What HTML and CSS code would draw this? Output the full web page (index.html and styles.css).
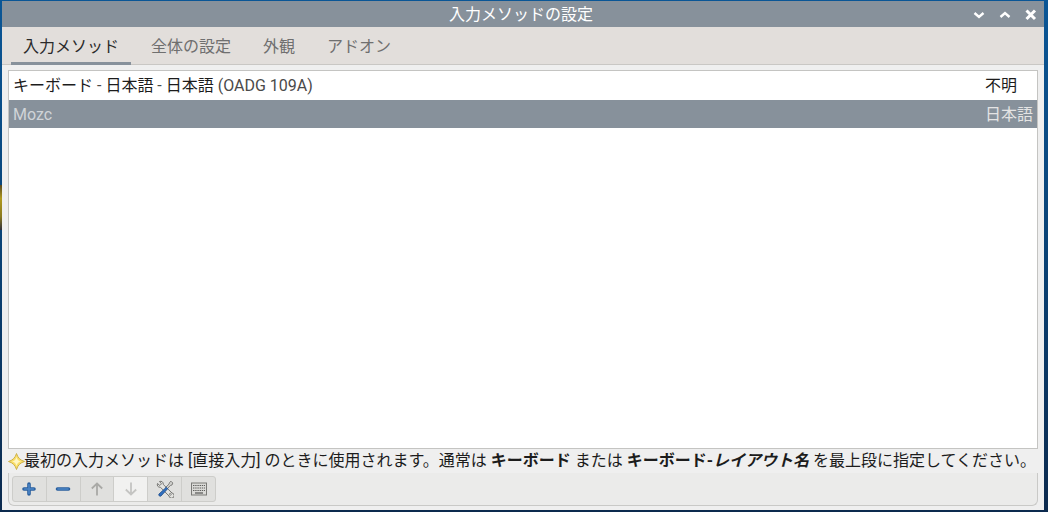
FILE: index.html
```html
<!DOCTYPE html>
<html lang="ja">
<head>
<meta charset="utf-8">
<title>入力メソッドの設定</title>
<link rel="stylesheet" href="styles.css">
</head>
<body>
<div class="desktop">
  <div class="sliver"></div>
  <main class="window">
    <header class="titlebar">
      <span class="title">入力メソッドの設定</span>
      <div class="controls">
        <svg width="16" height="16" viewBox="0 0 16 16"><path d="M3.500 6l4.500 4 4.500-4" class="ctl"/></svg>
        <svg width="16" height="16" viewBox="0 0 16 16"><path d="M3.500 10l4.500-4 4.500 4" class="ctl"/></svg>
        <svg width="16" height="16" viewBox="0 0 16 16"><path d="M3.500 3.500l8.500 8.500M12 3.500l-8.500 8.500" class="ctl ctl-x"/></svg>
      </div>
    </header>
    <nav class="tabs">
      <span class="tab active">入力メソッド</span>
      <span class="tab">全体の設定</span>
      <span class="tab">外観</span>
      <span class="tab">アドオン</span>
    </nav>
    <section class="body">
      <div class="list">
        <div class="row"><span>キーボード <span class="soft">-</span> 日本語 <span class="soft">-</span> 日本語 <span class="soft">(OADG 109A)</span></span><span class="lang unknown">不明</span></div>
        <div class="row selected"><span class="soft-light">Mozc</span><span class="lang">日本語</span></div>
      </div>
      <p class="hint">
        <svg class="star" width="17" height="17" viewBox="0 0 17 17"><path d="M8.500 .5C9.800 4.800 12.200 7.200 16.500 8.500 12.200 9.800 9.800 12.200 8.500 16.500 7.200 12.200 4.800 9.800 .5 8.500 4.800 7.200 7.200 4.800 8.500 .5z" fill="#fadf6a" stroke="#cdb04a" stroke-width="1"/><path d="M8.500 4C9.200 6.800 10.200 7.800 13 8.500 10.200 9.200 9.200 10.200 8.500 13 7.800 10.200 6.800 9.200 4 8.500 6.800 7.800 7.800 6.800 8.500 4z" fill="#fff6c4"/></svg><span>最初の入力メソッドは [直接入力] のときに使用されます。通常は <b>キーボード</b> または <b>キーボード-<i>レイアウト名</i></b> を最上段に指定してください。</span>
      </p>
      <div class="toolbar-wrap">
        <div class="toolbar">
          <button class="tool"><svg width="16" height="16" viewBox="0 0 16 16"><path d="M8 3v10M3 8h10" stroke="#2a5f9e" stroke-width="3.600" stroke-linecap="round"/><path d="M8 3.500v9M3.500 8h9" stroke="#4c86c6" stroke-width="1.600" stroke-linecap="round"/></svg></button>
          <button class="tool"><svg width="16" height="16" viewBox="0 0 16 16"><path d="M2.500 8h11" stroke="#2a5f9e" stroke-width="3.600" stroke-linecap="round"/><path d="M3 8h10" stroke="#4c86c6" stroke-width="1.600" stroke-linecap="round"/></svg></button>
          <button class="tool"><svg width="16" height="16" viewBox="0 0 16 16"><path d="M8 14.500V2.500M2.800 7.500L8 2.500l5.200 5" fill="none" stroke="#a9a9a6" stroke-width="1.800"/></svg></button>
          <button class="tool pressed"><svg width="16" height="16" viewBox="0 0 16 16"><path d="M8 1.500v12M2.800 8.500L8 13.500l5.200-5" fill="none" stroke="#c4c4c2" stroke-width="1.800"/></svg></button>
          <button class="tool"><svg width="18" height="18" viewBox="0 0 18 18"><path d="M1.500 3.500L3.800 5.500 5.500 3.800 3.500 1.500C5.500.7 7.500 2 7.300 4.500L16 13a2.600 2.600 0 1 1-3 3L4.500 7.300C2 7.500.7 5.500 1.500 3.500z" fill="#e4e4e1" stroke="#6c6c69" stroke-width=".9"/><circle cx="14.300" cy="14.300" r="1" fill="#e0e0de" stroke="#6c6c69" stroke-width=".7"/><path d="M15 1.200l1.800 1.800-.8 2-1.600.5-3.400 3.500-1.500-1.500 3.500-3.400.5-1.600z" fill="#cfcfcc" stroke="#6c6c69" stroke-width=".8"/><path d="M10.300 7.300l1.400 1.400-6.700 7.300c-1.100 1-3-.9-2-2z" fill="#2f6fc0" stroke="#1d4a86" stroke-width=".8"/></svg></button>
          <button class="tool"><svg width="18" height="16" viewBox="0 0 18 16"><rect x="1.500" y="2" width="15" height="12" fill="#dadad7" stroke="#7a7a77"/><path d="M3 4.500h12M3 7h12M3 9.500h12" stroke="#5f5f5d" stroke-width="1.200" stroke-dasharray="1.400 .8"/><path d="M5 12h8" stroke="#5f5f5d" stroke-width="1.300"/></svg></button>
        </div>
      </div>
    </section>
  </main>
</div>
</body>
</html>
```
FILE: styles.css
```css
* { box-sizing: border-box; }
html, body { margin: 0; height: 100%; }
body {
  font-family: Roboto, "Noto Sans CJK JP", sans-serif;
  font-size: 16px;
  color: #1c1c1c;
  overflow: hidden;
}
.desktop {
  position: relative;
  width: 1048px;
  height: 512px;
  background: linear-gradient(#0a5696, #0a4478 45%, #0c2a4e);
  overflow: hidden;
}
.sliver {
  position: absolute;
  left: 0;
  top: 185px;
  width: 3px;
  height: 45px;
  background: linear-gradient(#5a4a20, #b09a20 30%, #8a7a20 70%, #30303a);
}
.window {
  position: absolute;
  left: 2px;
  top: 1px;
  width: 1042px;
  height: 509px;
  background: #efefef;
  display: flex;
  flex-direction: column;
}
.titlebar {
  height: 26px;
  flex: none;
  background: #87919b;
  color: #fff;
  display: flex;
  align-items: center;
  justify-content: center;
  position: relative;
  padding: 1px 4px 0 0;
}
.title { font-size: 16px; line-height: 25px; }
.controls {
  position: absolute;
  right: 5px;
  top: 6px;
  display: flex;
  gap: 10px;
}
.ctl { fill: none; stroke: #fff; stroke-width: 2.400; }
.ctl-x { stroke-width: 3; }
.tabs {
  height: 38px;
  flex: none;
  background: #e2dedb;
  border-bottom: 1px solid #c9c7c4;
  display: flex;
  padding-left: 9px;
}
.tab {
  padding: 0 12px;
  line-height: 39px;
  margin-right: 8px;
  color: #6f6f6f;
  height: 38px;
}
.tab.active {
  color: #2a2a2a;
  border-bottom: 3px solid #87919b;
}
.body {
  flex: 1;
  display: flex;
  flex-direction: column;
  padding: 5px 6px 6px;
  min-height: 0;
}
.list {
  height: 379px;
  flex: none;
  background: #fff;
  border: 1px solid #c4c4c2;
}
.row {
  display: flex;
  justify-content: space-between;
  height: 29px;
  line-height: 29px;
  padding: 0 4px;
  color: #1c1c1c;
}
.row.selected { background: #87919b; color: #e4e4e4; height: 28px; line-height: 30px; }
.soft { color: #4a4a4a; }
.soft-light { color: #d0d4d8; }
.lang.unknown { padding-right: 16px; }
.hint {
  margin: 0;
  height: 24px;
  flex: none;
  display: flex;
  align-items: center;
  line-height: 24px;
  white-space: nowrap;
  color: #1c1c1c;
  font-size: 16px;
}
.star { flex: none; margin-right: -1px; }
.toolbar-wrap {
  flex: 1;
  background: #ebebea;
  border: 1px solid #c9c9c7;
  border-top: 0;
  border-radius: 0 0 6px 6px;
  padding: 3px 3px;
}
.toolbar {
  display: flex;
  width: 204px;
  height: 26px;
  background: #e0e0de;
  border: 1px solid #cdcdca;
  border-radius: 3px;
}
.tool {
  flex: 1;
  height: 100%;
  padding: 0;
  border: 0;
  border-right: 1px solid #cdcdca;
  background: transparent;
  display: flex;
  align-items: center;
  justify-content: center;
}
.tool:last-child { border-right: 0; }
.tool.pressed { background: #f1f1f0; }
```
